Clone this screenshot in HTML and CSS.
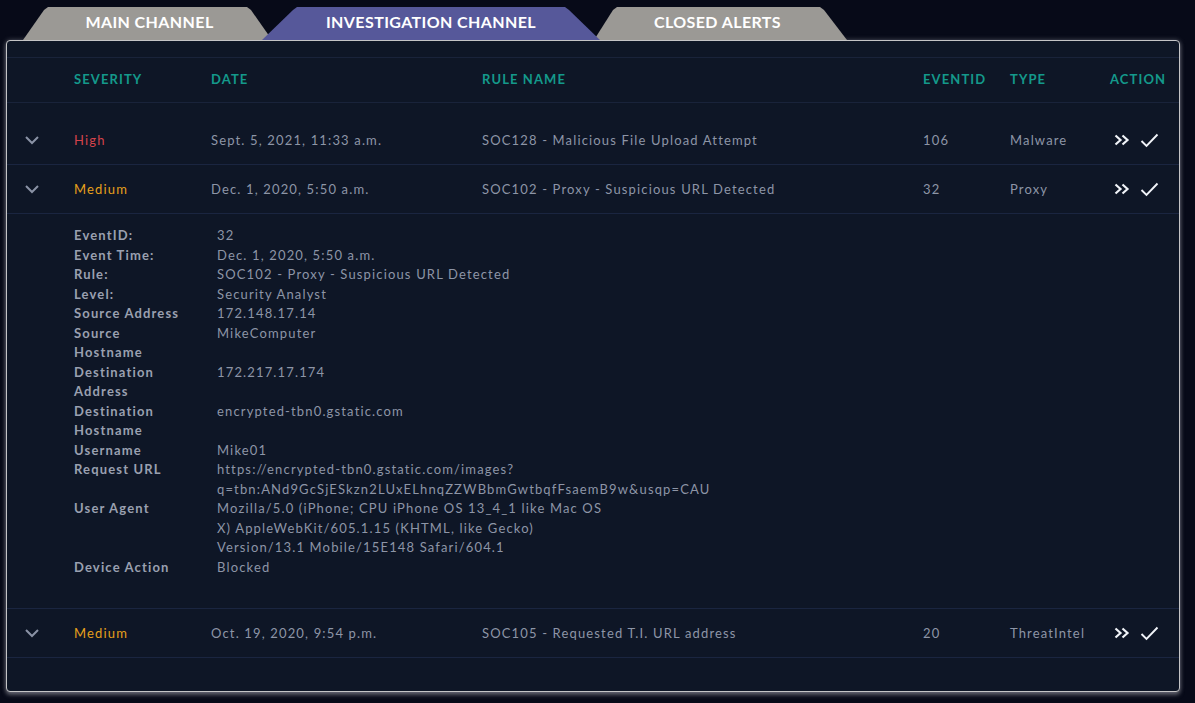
FILE: index.html
```html
<!DOCTYPE html>
<html>
<head>
    <meta charset="UTF-8">
    <meta name="viewport" content="width=device-width, initial-scale=1.0">
    <title>Investigation Channel</title>
    <link rel="stylesheet" href="styles.css">
</head>
<body>
    <div class="page">
        <div class="tabs">
            <div class="tab tab-main">MAIN CHANNEL</div>
            <div class="tab tab-investigation">INVESTIGATION CHANNEL</div>
            <div class="tab tab-closed">CLOSED ALERTS</div>
        </div>

        <div class="panel">
            <div class="row head">
                <div></div>
                <div>SEVERITY</div>
                <div>DATE</div>
                <div>RULE NAME</div>
                <div>EVENTID</div>
                <div>TYPE</div>
                <div>ACTION</div>
            </div>
            <div class="spacer"></div>

            <div class="row">
                <div class="toggle">
                    <svg width="14" height="9" viewBox="0 0 14 9"><polyline points="1,1 7,7 13,1" fill="none" stroke="#8a92a5" stroke-width="2"/></svg>
                </div>
                <div class="sev high">High</div>
                <div>Sept. 5, 2021, 11:33 a.m.</div>
                <div>SOC128 - Malicious File Upload Attempt</div>
                <div>106</div>
                <div>Malware</div>
                <div class="actions">
                    <svg width="16" height="12" viewBox="0 0 16 12"><polyline points="1.5,1.5 6.5,6 1.5,10.5" fill="none" stroke="#f0f3f8" stroke-width="2.2"/><polyline points="8.5,1.5 13.5,6 8.5,10.5" fill="none" stroke="#f0f3f8" stroke-width="2.2"/></svg>
                    <svg width="19" height="15" viewBox="0 0 19 15"><polyline points="1.5,8 6.5,13 17.5,1.5" fill="none" stroke="#f0f3f8" stroke-width="1.9"/></svg>
                </div>
            </div>

            <div class="row">
                <div class="toggle">
                    <svg width="14" height="9" viewBox="0 0 14 9"><polyline points="1,1 7,7 13,1" fill="none" stroke="#8a92a5" stroke-width="2"/></svg>
                </div>
                <div class="sev medium">Medium</div>
                <div>Dec. 1, 2020, 5:50 a.m.</div>
                <div>SOC102 - Proxy - Suspicious URL Detected</div>
                <div>32</div>
                <div>Proxy</div>
                <div class="actions">
                    <svg width="16" height="12" viewBox="0 0 16 12"><polyline points="1.5,1.5 6.5,6 1.5,10.5" fill="none" stroke="#f0f3f8" stroke-width="2.2"/><polyline points="8.5,1.5 13.5,6 8.5,10.5" fill="none" stroke="#f0f3f8" stroke-width="2.2"/></svg>
                    <svg width="19" height="15" viewBox="0 0 19 15"><polyline points="1.5,8 6.5,13 17.5,1.5" fill="none" stroke="#f0f3f8" stroke-width="1.9"/></svg>
                </div>
            </div>

            <div class="details">
                <div class="label">EventID:</div><div class="value">32</div>
                <div class="label">Event Time:</div><div class="value">Dec. 1, 2020, 5:50 a.m.</div>
                <div class="label">Rule:</div><div class="value">SOC102 - Proxy - Suspicious URL Detected</div>
                <div class="label">Level:</div><div class="value">Security Analyst</div>
                <div class="label">Source Address</div><div class="value">172.148.17.14</div>
                <div class="label">Source Hostname</div><div class="value">MikeComputer</div>
                <div class="label">Destination Address</div><div class="value">172.217.17.174</div>
                <div class="label">Destination Hostname</div><div class="value">encrypted-tbn0.gstatic.com</div>
                <div class="label">Username</div><div class="value">Mike01</div>
                <div class="label">Request URL</div><div class="value">https://encrypted-tbn0.gstatic.com/images?<br>q=tbn:ANd9GcSjESkzn2LUxELhnqZZWBbmGwtbqfFsaemB9w&amp;usqp=CAU</div>
                <div class="label">User Agent</div><div class="value">Mozilla/5.0 (iPhone; CPU iPhone OS 13_4_1 like Mac OS X) AppleWebKit/605.1.15 (KHTML, like Gecko) Version/13.1 Mobile/15E148 Safari/604.1</div>
                <div class="label">Device Action</div><div class="value">Blocked</div>
            </div>

            <div class="row">
                <div class="toggle">
                    <svg width="14" height="9" viewBox="0 0 14 9"><polyline points="1,1 7,7 13,1" fill="none" stroke="#8a92a5" stroke-width="2"/></svg>
                </div>
                <div class="sev medium">Medium</div>
                <div>Oct. 19, 2020, 9:54 p.m.</div>
                <div>SOC105 - Requested T.I. URL address</div>
                <div>20</div>
                <div>ThreatIntel</div>
                <div class="actions">
                    <svg width="16" height="12" viewBox="0 0 16 12"><polyline points="1.5,1.5 6.5,6 1.5,10.5" fill="none" stroke="#f0f3f8" stroke-width="2.2"/><polyline points="8.5,1.5 13.5,6 8.5,10.5" fill="none" stroke="#f0f3f8" stroke-width="2.2"/></svg>
                    <svg width="19" height="15" viewBox="0 0 19 15"><polyline points="1.5,8 6.5,13 17.5,1.5" fill="none" stroke="#f0f3f8" stroke-width="1.9"/></svg>
                </div>
            </div>
        </div>
    </div>
</body>
</html>
```

FILE: styles.css
```css
* {
    box-sizing: border-box;
    margin: 0;
    padding: 0;
}

body {
    font-family: Lato, "Open Sans", Arial, sans-serif;
    background-color: #070a18;
    min-height: 100vh;
}

.page {
    padding: 7px 15px 0 6px;
}

.tabs {
    display: flex;
    padding-left: 17px;
    height: 33px;
}

.tab {
    height: 33px;
    line-height: 30px;
    text-align: center;
    color: #ffffff;
    font-weight: bold;
    font-size: 16px;
    letter-spacing: 0.4px;
}

.tab-main {
    width: 249px;
    padding-left: 4px;
    background: #9b9995;
    clip-path: polygon(0 100%, 21px 3px, 25px 0, 224px 0, 228px 3px, 100% 100%);
}

.tab-investigation {
    width: 338px;
    margin-left: -10px;
    background: #56589a;
    position: relative;
    z-index: 2;
    clip-path: polygon(0 100%, 31px 3px, 35px 0, 303px 0, 307px 3px, 100% 100%);
}

.tab-closed {
    width: 253px;
    margin-left: -6px;
    padding-right: 6px;
    background: #9b9995;
    clip-path: polygon(0 100%, 19px 3px, 23px 0, 226px 0, 230px 3px, 100% 100%);
}

.panel {
    background: #0e1626;
    border: 1px solid #c4c4c6;
    border-radius: 4px;
    box-shadow: 0 0 5px rgba(200, 200, 210, 0.35), 0 3px 4px rgba(150, 150, 160, 0.5);
    padding-top: 16px;
    padding-bottom: 33px;
    height: 652px;
}

.row {
    display: grid;
    grid-template-columns: 67px 137px 271px 441px 87px 100px 1fr;
    align-items: center;
    height: 49px;
    border-bottom: 1px solid #1a2540;
    color: #8d95a6;
    font-size: 13px;
    letter-spacing: 1.15px;
}

.row.head {
    height: 46px;
    padding-bottom: 3px;
    border-top: 1px solid #19233a;
    border-bottom: 1px solid #19233a;
    color: #14998b;
    font-weight: bold;
    letter-spacing: 1.1px;
}

.spacer {
    height: 13px;
}

.toggle {
    display: flex;
    padding-left: 18px;
}

.sev.high {
    color: #d4434b;
}

.sev.medium {
    color: #e6a01c;
}

.actions {
    display: flex;
    align-items: center;
    gap: 10px;
    padding-left: 4px;
}

.details {
    display: grid;
    grid-template-columns: 143px 390px;
    padding: 12px 0 31px 67px;
    border-bottom: 1px solid #1a2540;
    font-size: 13px;
    line-height: 19.5px;
    letter-spacing: 1.15px;
}

.label {
    color: #9aa0b0;
    font-weight: bold;
    padding-right: 33px;
}

.value {
    color: #8d95a6;
}
```
